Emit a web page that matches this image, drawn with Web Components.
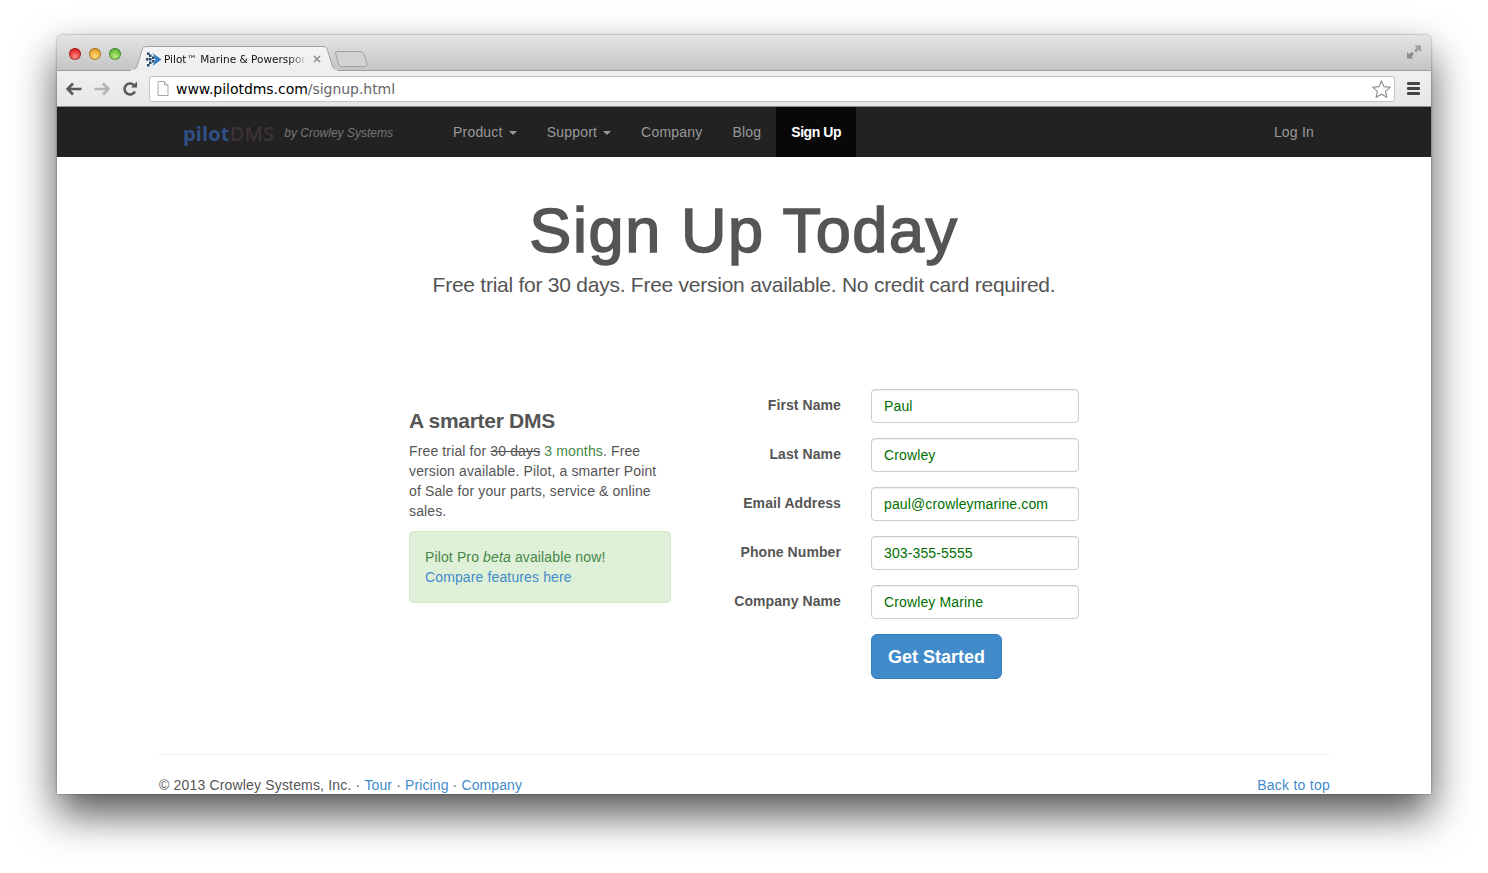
<!DOCTYPE html>
<html>
<head>
<meta charset="utf-8">
<title>Sign Up</title>
<style>
  html, body { margin: 0; height: 100%; background: #fff; overflow: hidden; }
  body { font-family: "Liberation Sans", Arial, sans-serif; }
</style>
</head>
<body>
<browser-window>
  <tab-strip slot="chrome" title-text="Pilot™ Marine &amp; Powerspor"></tab-strip>
  <url-bar slot="chrome"></url-bar>
  <site-nav></site-nav>
  <hero-head heading="Sign Up Today">Free trial for 30 days. Free version available. No credit card required.</hero-head>
  <signup-section>
    <side-pitch slot="left"></side-pitch>
    <form-field slot="right" label="First Name">Paul</form-field>
    <form-field slot="right" label="Last Name">Crowley</form-field>
    <form-field slot="right" label="Email Address">paul@crowleymarine.com</form-field>
    <form-field slot="right" label="Phone Number">303-355-5555</form-field>
    <form-field slot="right" label="Company Name">Crowley Marine</form-field>
    <submit-button slot="right">Get Started</submit-button>
  </signup-section>
  <site-footer></site-footer>
</browser-window>

<script>
function make(tag, css, html) {
  const tpl = document.createElement("template");
  tpl.innerHTML = `<style>${css}</style>${html}`;
  customElements.define(tag, class extends HTMLElement {
    constructor() {
      super();
      const root = this.attachShadow({ mode: "open" });
      root.append(tpl.content.cloneNode(true));
      // attributes fill any [data-attr] placeholder
      root.querySelectorAll("[data-attr]").forEach((el) => {
        el.textContent = this.getAttribute(el.dataset.attr);
      });
    }
  });
}

make("browser-window", `
  :host {
    display: flex; flex-direction: column;
    width: 1374px; height: 759px; margin: 35px 57px 0;
    background: #fff; border-radius: 5px 5px 0 0;
    box-shadow: 0 20px 42px rgba(0,0,0,.68), 0 0 2px rgba(0,0,0,.5);
    color: #555; font-size: 14px; line-height: 20px; letter-spacing: .13px;
  }
  .clip { display: flex; flex-direction: column; height: 100%; overflow: hidden; border-radius: 5px 5px 0 0; }
`, `<div class="clip"><slot name="chrome"></slot><slot></slot></div>`);

make("tab-strip", `
  :host {
    display: flex; align-items: flex-end; height: 36px; box-sizing: border-box; flex: none;
    background: linear-gradient(#e4e4e4, #d8d8d8 40%, #c4c4c4);
    border-bottom: 1px solid #9e9e9e; position: relative; letter-spacing: 0;
  }
  .lights { display: flex; gap: 8px; padding-left: 12px; width: 66px; box-sizing: border-box; align-self: center; margin-top: 3px; }
  .lights i { width: 12px; height: 12px; border-radius: 50%; box-shadow: inset 0 0 0 1px rgba(0,0,0,.28); }
  .r { background: radial-gradient(circle at 50% 70%, #ff8d85, #e0262a 65%, #a8181c); }
  .y { background: radial-gradient(circle at 50% 70%, #ffdc7a, #e8a12a 65%, #b9771a); }
  .g { background: radial-gradient(circle at 50% 70%, #b9ec7c, #5fbb3c 65%, #3f8f28); }
  .tab { position: relative; width: 208px; height: 25px; margin: 0 0 -1px 7px; display: flex; align-items: center; padding: 1px 0 0 16px; box-sizing: border-box; flex: none; }
  .tab > svg.shape { position: absolute; left: 0; top: 0; }
  .fav { position: relative; margin-right: 2px; flex: none; }
  .title { position: relative; width: 141px; overflow: hidden; white-space: nowrap; font: 10.5px/14px "DejaVu Sans", sans-serif; color: #111;
    -webkit-mask-image: linear-gradient(90deg, #000 88%, rgba(0,0,0,.15) 100%); mask-image: linear-gradient(90deg, #000 88%, rgba(0,0,0,.15) 100%); }
  .x { position: relative; margin-left: 8px; flex: none; }
  .newtab { margin: 0 0 3px -3px; flex: none; position: relative; }
  .expand { position: absolute; right: 9px; top: 9px; }
`, `
  <div class="lights"><i class="r"></i><i class="y"></i><i class="g"></i></div>
  <div class="tab">
    <svg class="shape" width="208" height="25" viewBox="0 0 208 25">
      <defs><linearGradient id="t" x1="0" x2="0" y1="0" y2="1"><stop offset="0" stop-color="#f5f5f5"/><stop offset="1" stop-color="#ededed"/></linearGradient></defs>
      <path d="M0 24.500C4 24.500 6 23 7 20L12 4C13 1.500 14.500 .500 17 .500H192C195 .500 196.500 1.500 197.500 4L202 19C203 22.500 205 24.500 208 24.500V25H0Z" fill="url(#t)" stroke="#a2a2a2"/>
      <path d="M1 24.500H207" stroke="#eeeeee" stroke-width="2"/>
    </svg>
    <svg class="fav" width="16" height="15" viewBox="0 0 16 15">
      <path d="M6.500 1L15.500 7.500L6.500 14L9.500 7.500Z" fill="#2f7fc4"/>
      <g fill="#24496f"><rect x="0" y="6" width="2.500" height="2.500"/><rect x="3" y="2.500" width="2.500" height="2.500"/><rect x="3" y="6" width="2.500" height="2.500"/><rect x="3" y="9.500" width="2.500" height="2.500"/><rect x="6" y="4.500" width="2.500" height="2.500"/><rect x="6" y="8" width="2.500" height="2.500"/><rect x="1" y="12" width="2.500" height="2.500"/><rect x="1" y="0.500" width="2.500" height="2.500"/></g>
    </svg>
    <span class="title" data-attr="title-text"></span>
    <svg class="x" width="8" height="8" viewBox="0 0 8 8"><path d="M1 1L7 7M7 1L1 7" stroke="#8a8a8a" stroke-width="1.500"/></svg>
  </div>
  <svg class="newtab" width="33" height="16" viewBox="0 0 33 16"><path d="M1 .500H25C27 .500 28 1.500 29 3.500L32 12.500C32.500 14.500 31.500 15.500 29.500 15.500H7C5 15.500 4 14.500 3.500 13L.500 2C.300 1 .500.500 1 .500Z" fill="#d2d2d2" stroke="#a0a0a0"/></svg>
  <svg class="expand" width="16" height="16" viewBox="0 0 16 16" fill="#8a8a8a">
    <path d="M8.500 1.500H15V8L12.700 5.700L10 8.400L8 6.400L10.700 3.700Z" opacity=".75"/>
    <path d="M1 8L3.300 10.300L5.800 7.800L8 10L5.500 12.500L7.500 14.500H1Z"/>
  </svg>
`);

make("url-bar", `
  :host {
    display: flex; align-items: center; height: 36px; box-sizing: border-box; flex: none;
    background: linear-gradient(#f0f0f0, #e6e6e6);
    border-bottom: 1px solid #8f8f8f; padding: 0 11px 0 9px; letter-spacing: 0;
  }
  .nav { flex: none; }
  .fwd { margin-left: 12px; }
  .reload { margin-left: 12px; }
  .box {
    flex: 1; height: 26px; margin-left: 11px; display: flex; align-items: center;
    background: #fff; border: 1px solid #c4c4c4; border-radius: 3px; box-sizing: border-box; padding: 0 3px 0 7px;
  }
  .url { flex: 1; margin-left: 7px; font: 14px/18px "DejaVu Sans", sans-serif; letter-spacing: -.04px; color: #000; white-space: nowrap; }
  .url span { color: #666; }
  .menu { margin-left: 12px; flex: none; }
`, `
  <svg class="nav" width="16" height="14" viewBox="0 0 16 14"><path d="M7 1.500L1.500 7L7 12.500M2 7H15.500" fill="none" stroke="#5a5a5a" stroke-width="2.600"/></svg>
  <svg class="nav fwd" width="16" height="14" viewBox="0 0 16 14"><path d="M9 1.500L14.500 7L9 12.500M14 7H.500" fill="none" stroke="#b4b4b4" stroke-width="2.600"/></svg>
  <svg class="nav reload" width="16" height="16" viewBox="0 0 16 16"><path d="M13 10.500A5.500 5.500 0 1 1 11.800 4" fill="none" stroke="#5a5a5a" stroke-width="2.600"/><path d="M9 6.500H15V.500Z" fill="#5a5a5a"/></svg>
  <div class="box">
    <svg width="12" height="15" viewBox="0 0 12 15"><path d="M1 .500H7.500L11 4V14.500H1Z" fill="#fdfdfd" stroke="#a8a8a8"/><path d="M7.500 .500V4H11" fill="#e8e8e8" stroke="#a8a8a8"/></svg>
    <div class="url">www.pilotdms.com<span>/signup.html</span></div>
    <svg width="19" height="18" viewBox="0 0 20 19"><path d="M10 1.200L12.700 7L19 7.700L14.300 12L15.600 18.200L10 15L4.400 18.200L5.700 12L1 7.700L7.300 7Z" fill="#fff" stroke="#8c8c8c" stroke-width="1.200"/></svg>
  </div>
  <svg class="menu" width="13" height="13" viewBox="0 0 13 13" fill="#444"><rect y="0" width="13" height="3" rx="1"/><rect y="5" width="13" height="3" rx="1"/><rect y="10" width="13" height="3" rx="1"/></svg>
`);

make("site-nav", `
  :host {
    display: flex; justify-content: center; height: 50px; background: #222;
    font: 14px/20px "Liberation Sans", Arial, sans-serif; letter-spacing: .2px; color: #999; flex: none;
  }
  .wrap { width: 1170px; display: flex; padding: 0 15px; box-sizing: border-box; }
  .brand { width: 264px; display: flex; align-items: center; padding-left: 9px; box-sizing: border-box; white-space: nowrap; letter-spacing: 0; }
  .logo { font: bold 20px/24px "Open Sans", sans-serif; color: #2f4f86; letter-spacing: .15px; margin-top: 3px; }
  .logo span { color: #3b3337; font-weight: 600; }
  .by { font: italic 12px/16px "Liberation Sans", sans-serif; color: #777; margin-left: 10px; margin-top: 2px; }
  a { display: flex; align-items: center; padding: 0 15px; color: #999; }
  a.on { background: #080808; color: #fff; font-weight: bold; letter-spacing: -.45px; padding: 0 15px; }
  .caret { width: 0; height: 0; margin-left: 6px; margin-top: 2px; border-top: 4px solid #999; border-left: 4px solid transparent; border-right: 4px solid transparent; }
  .right { margin-left: auto; margin-right: -15px; }
`, `
  <div class="wrap">
    <div class="brand"><span class="logo">pilot<span>DMS</span></span><span class="by">by Crowley Systems</span></div>
    <a>Product<i class="caret"></i></a>
    <a>Support<i class="caret"></i></a>
    <a>Company</a>
    <a>Blog</a>
    <a class="on">Sign Up</a>
    <a class="right">Log In</a>
  </div>
`);

make("hero-head", `
  :host { display: block; text-align: center; padding-top: 38px; height: 194px; box-sizing: border-box; flex: none; }
  h1 { margin: 0; font: 400 63px/70px "Liberation Sans", Arial, sans-serif; color: #555; letter-spacing: 1.6px; -webkit-text-stroke: 1.6px #555; }
  p { margin: 5px 0 0; font: 300 21px/30px "Liberation Sans", Arial, sans-serif; color: #555; letter-spacing: -.25px; }
`, `<h1 data-attr="heading"></h1><p><slot></slot></p>`);

make("signup-section", `
  :host { display: flex; justify-content: center; flex: none; height: 403px; }
  .wrap { width: 1170px; display: flex; padding: 38px 0 0 250px; box-sizing: border-box; }
  .left { width: 262px; flex: none; padding-top: 20px; }
  .right { width: 378px; }
`, `<div class="wrap"><div class="left"><slot name="left"></slot></div><div class="right"><slot name="right"></slot></div></div>`);

make("side-pitch", `
  :host { display: block; }
  h3 { margin: 0 0 8px; font: bold 21px/24px "Liberation Sans", Arial, sans-serif; color: #555; letter-spacing: -.3px; }
  p { margin: 0 0 10px; width: 250px; }
  .first { display: block; white-space: nowrap; }
  s { color: #555; }
  .g { color: #468847; }
  .alert { background: #dff0d8; border: 1px solid #d6e9c6; border-radius: 4px; padding: 15px; color: #468847; }
  a { color: #428bca; display: block; }
`, `
  <h3>A smarter DMS</h3>
  <p><span class="first">Free trial for <s>30 days</s> <span class="g">3 months</span>. Free</span>version available. Pilot, a smarter Point of Sale for your parts, service &amp; online sales.</p>
  <div class="alert">Pilot Pro <em>beta</em> available now!<a>Compare features here</a></div>
`);

make("form-field", `
  :host { display: flex; align-items: center; height: 34px; margin-bottom: 15px; }
  label { width: 170px; flex: none; text-align: right; font-weight: bold; color: #555; margin-top: -2px; white-space: nowrap; letter-spacing: .08px; }
  .input {
    width: 208px; height: 34px; box-sizing: border-box; margin-left: 30px; padding: 6px 12px; flex: none;
    background: #fff; border: 1px solid #ccc; border-radius: 4px; color: #006f00;
    box-shadow: inset 0 1px 1px rgba(0,0,0,.075); line-height: 20px; white-space: nowrap;
  }
`, `<label data-attr="label"></label><div class="input" role="textbox"><slot></slot></div>`);

make("submit-button", `
  :host { display: block; padding-left: 200px; }
  .btn {
    display: inline-block; box-sizing: border-box; height: 45px; width: 131px; text-align: center;
    background: #428bca; border: 1px solid #357ebd; border-radius: 6px; color: #fff;
    font: bold 18px/44px "Liberation Sans", Arial, sans-serif; letter-spacing: 0;
  }
`, `<div class="btn" role="button"><slot></slot></div>`);

make("site-footer", `
  :host { display: flex; justify-content: center; flex: none; }
  .wrap { width: 1170px; border-top: 1px solid #eee; padding-top: 20px; display: flex; justify-content: space-between; color: #555; letter-spacing: .17px; }
  a { color: #428bca; letter-spacing: .1px; }
  .top { letter-spacing: .25px; margin-right: -1px; }
`, `
  <div class="wrap">
    <div>© 2013 Crowley Systems, Inc. · <a>Tour</a> · <a>Pricing</a> · <a>Company</a></div>
    <a class="top">Back to top</a>
  </div>
`);
</script>
</body>
</html>
